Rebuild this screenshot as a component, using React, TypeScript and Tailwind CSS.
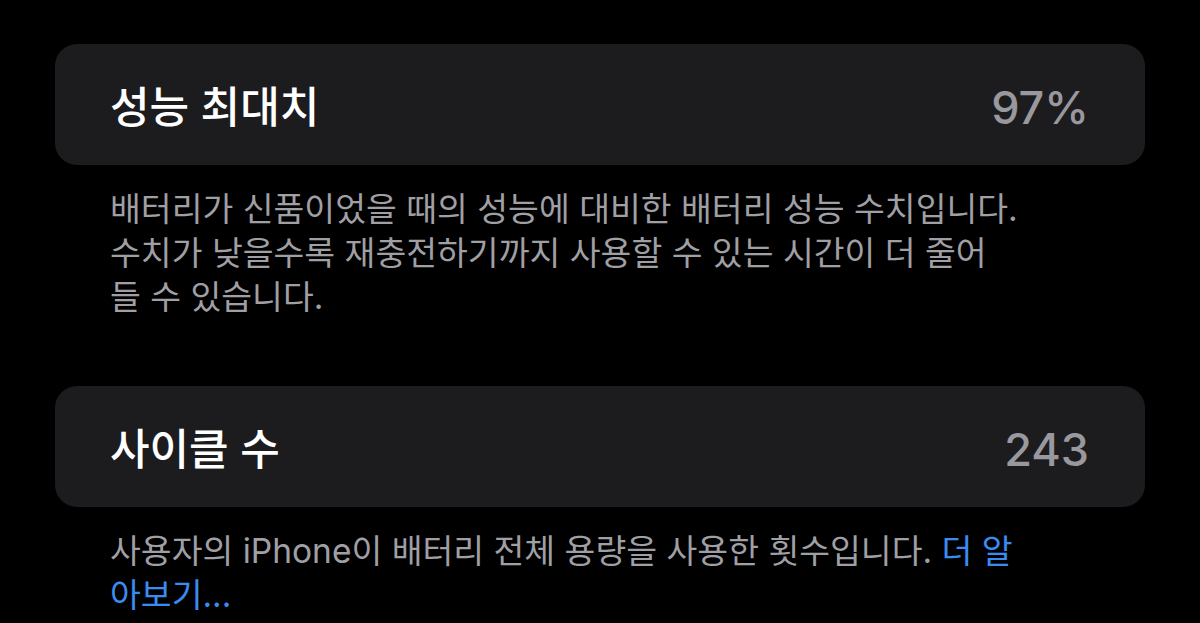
const font = { fontFamily: '"Inter", "Noto Sans CJK KR", sans-serif' };

function Row({ label, value }: { label: string; value: string }) {
  return (
    <div className="h-[121px] rounded-[22px] bg-[#1c1c1e] flex items-center justify-between pl-[55px] pr-[56px] pt-[6px]">
      <span className="text-[43px] font-medium text-white">{label}</span>
      <span className="text-[45px] font-medium text-[#98989e]">{value}</span>
    </div>
  );
}

export default function App() {
  return (
    <div className="w-[1200px] h-[623px] overflow-hidden bg-black px-[55px] pt-[44px]" style={font}>
      <Row label="성능 최대치" value="97%" />
      <p className="pl-[55px] mt-[22px] text-[33.5px] leading-[44px] text-[#9f9fa4]">
        배터리가 신품이었을 때의 성능에 대비한 배터리 성능 수치입니다.
        <br />
        수치가 낮을수록 재충전하기까지 사용할 수 있는 시간이 더 줄어
        <br />
        들 수 있습니다.
      </p>

      <div className="mt-[67px]">
        <Row label="사이클 수" value="243" />
      </div>
      <p className="pl-[55px] mt-[22px] text-[33.5px] leading-[44px] text-[#9f9fa4]">
        사용자의 iPhone이 배터리 전체 용량을 사용한 횟수입니다.{' '}
        <span className="text-[#3a8cf1]">더 알</span>
        <br />
        <span className="text-[#3a8cf1]">아보기...</span>
      </p>
    </div>
  );
}
